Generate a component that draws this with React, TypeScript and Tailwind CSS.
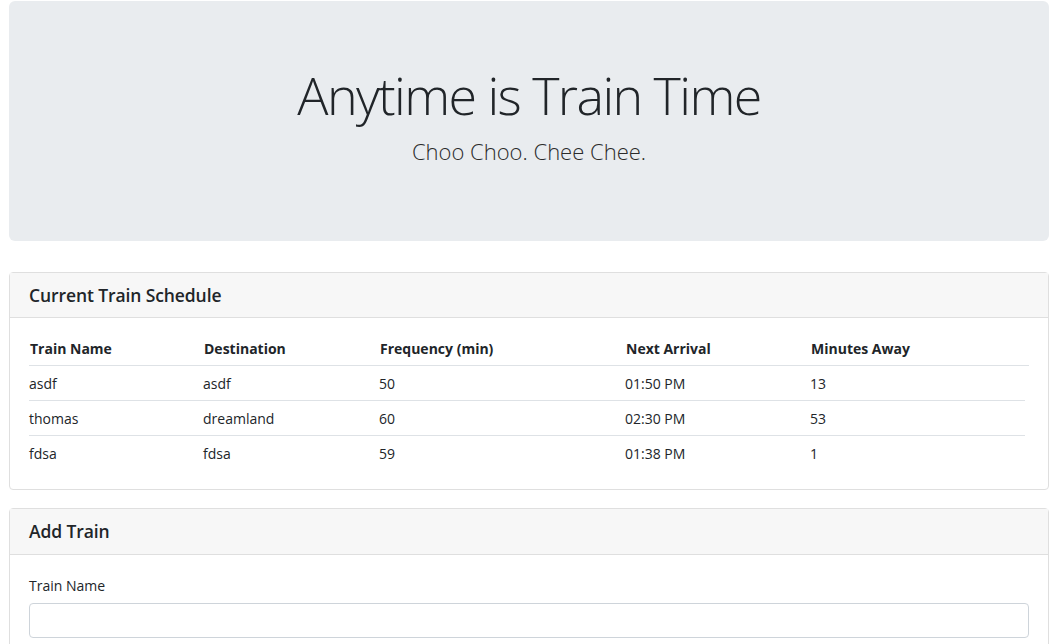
import React from 'react';

const trains = [
  { name: 'asdf', dest: 'asdf', freq: '50', next: '01:50 PM', away: '13' },
  { name: 'thomas', dest: 'dreamland', freq: '60', next: '02:30 PM', away: '53' },
  { name: 'fdsa', dest: 'fdsa', freq: '59', next: '01:38 PM', away: '1' },
];

const cols = 'grid grid-cols-[174px_176px_246px_185px_1fr]';

const App = () => {
  return (
    <div className="min-h-screen bg-white px-[9px] pt-px text-[#212529] font-['Open_Sans',sans-serif]">
      {/* Jumbotron */}
      <div className="h-[240px] rounded-md bg-[#e9ecef] flex flex-col items-center pt-[63px]">
        <h1 className="text-[52px] font-light leading-[62px] tracking-[-1.6px]">Anytime is Train Time</h1>
        <p className="mt-[10px] text-[22px] font-light leading-[30px] text-[#2b2b2b]">Choo Choo. Chee Chee.</p>
      </div>

      {/* Schedule card */}
      <div className="mt-[31px] rounded border border-[#dfdfdf]">
        <div className="h-[45px] bg-[#f7f7f7] border-b border-[#dfdfdf] px-[19px] flex items-center">
          <h5 className="text-[17.5px] font-semibold tracking-[-0.1px]">Current Train Schedule</h5>
        </div>
        <div className="px-[19px] pt-[13px] pb-[18px] text-[14px]">
          <div className={`${cols} h-[35px] items-center border-b border-[#dee2e6] font-bold`}>
            <div className="pl-px">Train Name</div>
            <div className="pl-px">Destination</div>
            <div className="pl-px">Frequency (min)</div>
            <div className="pl-px">Next Arrival</div>
            <div className="pl-px">Minutes Away</div>
          </div>
          {trains.map((t, i) => (
            <div
              key={t.name}
              className={`${cols} h-[35px] items-center mr-[4px] ${i < trains.length - 1 ? 'border-b border-[#dee2e6]' : ''}`}
            >
              <div>{t.name}</div>
              <div>{t.dest}</div>
              <div>{t.freq}</div>
              <div>{t.next}</div>
              <div>{t.away}</div>
            </div>
          ))}
        </div>
      </div>

      {/* Add train card */}
      <div className="mt-[18px] rounded border border-[#dfdfdf]">
        <div className="h-[46px] bg-[#f7f7f7] border-b border-[#dfdfdf] px-[19px] flex items-center">
          <h5 className="text-[17.5px] font-semibold tracking-[-0.1px]">Add Train</h5>
        </div>
        <div className="px-[19px] pt-[21px] pb-[20px]">
          <label className="block text-[14px] leading-[20px] mb-[7px]">Train Name</label>
          <input type="text" className="block w-full h-[35px] rounded border border-[#ced4da] bg-white px-3" />
        </div>
      </div>
    </div>
  );
};

export default App;
